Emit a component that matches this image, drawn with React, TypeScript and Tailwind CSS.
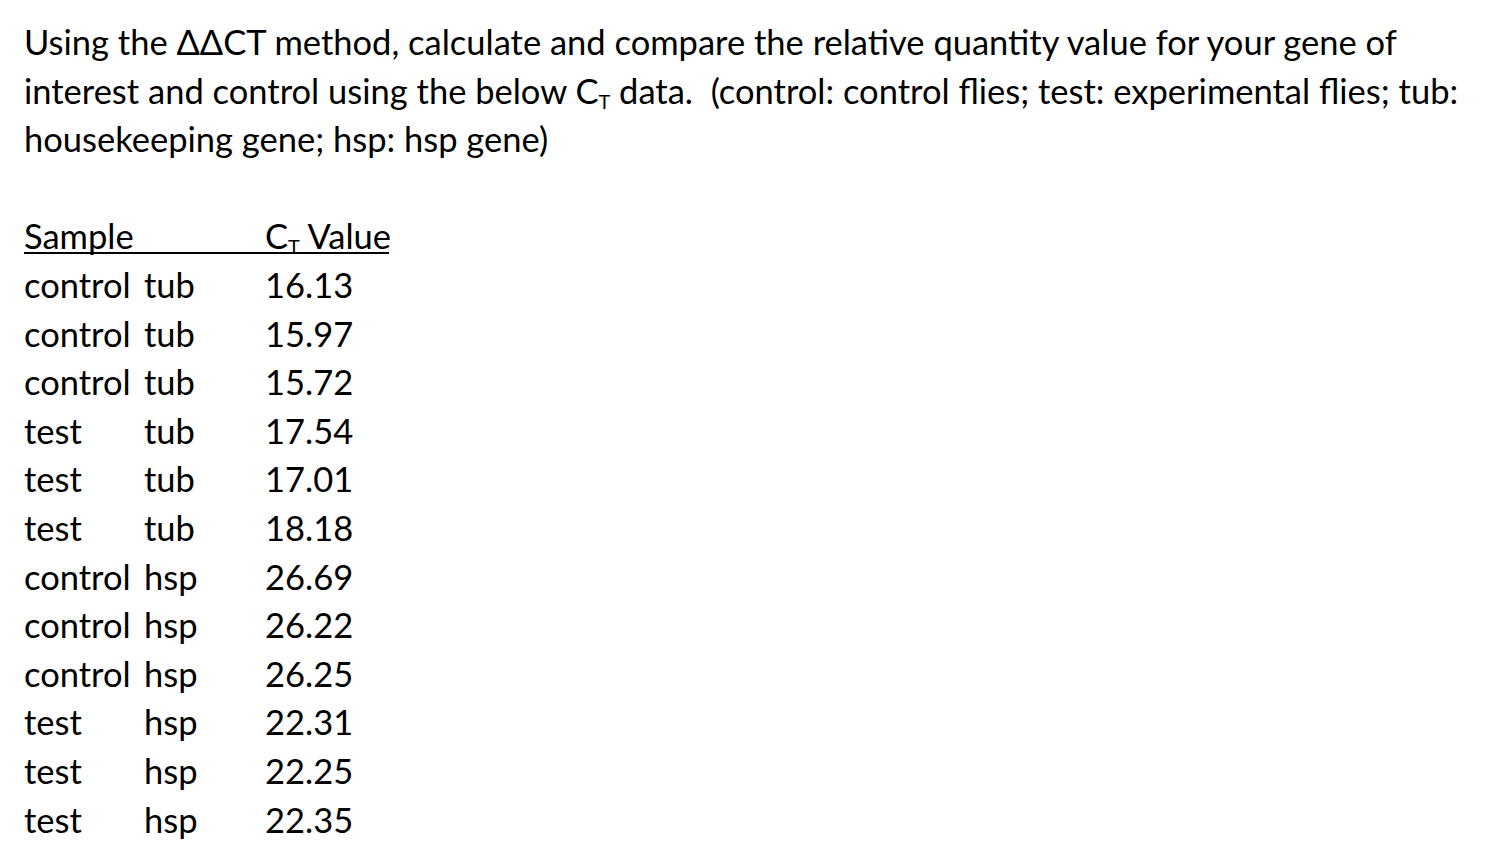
const rows: [string, string, string][] = [
  ["control", "tub", "16.13"],
  ["control", "tub", "15.97"],
  ["control", "tub", "15.72"],
  ["test", "tub", "17.54"],
  ["test", "tub", "17.01"],
  ["test", "tub", "18.18"],
  ["control", "hsp", "26.69"],
  ["control", "hsp", "26.22"],
  ["control", "hsp", "26.25"],
  ["test", "hsp", "22.31"],
  ["test", "hsp", "22.25"],
  ["test", "hsp", "22.35"],
];

function Ct() {
  return (
    <span className="whitespace-nowrap">
      C<span className="text-[20px] leading-none relative top-[5px]">T</span>
    </span>
  );
}

export default function App() {
  return (
    <div
      className="min-h-screen bg-white text-black pl-[24px] pt-[18px] text-[34.5px] leading-[48.6px]"
      style={{ fontFamily: "Lato, 'Open Sans', sans-serif" }}
    >
      <p className="whitespace-nowrap">
        Using the ΔΔCT method, calculate and compare the relative quantity value for your gene of
        <br />
        interest and control using the below <Ct /> data.&nbsp; (control: control flies; test: experimental flies; tub:
        <br />
        housekeeping gene; hsp: hsp gene)
      </p>

      <div className="h-[48.6px]" />

      {/* table header, underline runs across both columns */}
      <div className="h-[48.6px] flex items-center">
        <div className="flex w-[365px] border-b-2 border-black leading-[33px] whitespace-nowrap">
          <span className="w-[241px] shrink-0">Sample</span>
          <span className="shrink-0">
            <Ct /> Value
          </span>
        </div>
      </div>
      {rows.map((r, i) => (
        <div key={i} className="flex h-[48.6px] items-center">
          <span className="w-[120px]">{r[0]}</span>
          <span className="w-[121px]">{r[1]}</span>
          <span>{r[2]}</span>
        </div>
      ))}
    </div>
  );
}
